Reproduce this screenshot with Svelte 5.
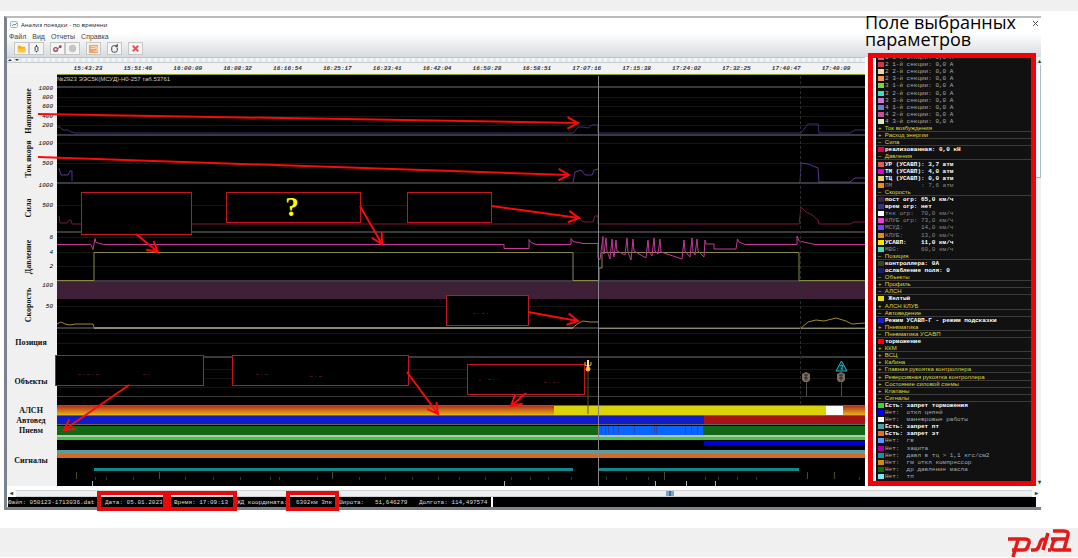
<script lang="ts">
	type Param = { c?: string; t: string; k?: 'group' | 'dim' | 'bold' };

	const times = [
		'15:43:23', '15:51:46', '16:00:09', '16:08:32', '16:16:54', '16:25:17', '16:33:41', '16:42:04',
		'16:50:28', '16:58:51', '17:07:16', '17:15:38', '17:24:02', '17:32:25', '17:40:47', '17:49:09'
	];

	const g = (t: string): Param => ({ t, k: 'group' });
	const b = (c: string, t: string): Param => ({ c, t, k: 'bold' });
	const d = (c: string, t: string): Param => ({ c, t, k: 'dim' });
	const n = (c: string, t: string): Param => ({ c, t });

	const params: Param[] = [
		n('#c86464', '1 3-й секции: 0,0 А'),
		n('#c83c46', '2 1-й секции: 0,0 А'),
		n('#e6dc96', '2 2-й секции: 0,0 А'),
		n('#f09650', '2 3-й секции: 0,0 А'),
		n('#6edc28', '3 1-й секции: 0,0 А'),
		n('#3cdcbe', '3 2-й секции: 0,0 А'),
		n('#c878dc', '3 3-й секции: 0,0 А'),
		n('#6482c8', '4 1-й секции: 0,0 А'),
		n('#c85096', '4 2-й секции: 0,0 А'),
		n('#d2f0b4', '4 3-й секции: 0,0 А'),
		g('+  Ток возбуждения'),
		g('+  Расход энергии'),
		g('−  Сила'),
		b('#e10050', 'реализованная: 0,0 кН'),
		g('−  Давления'),
		b('#dc5a5a', 'УР (УСАВП): 3,7 атм'),
		b('#dc00d2', 'ТМ (УСАВП): 4,0 атм'),
		b('#e6d278', 'ТЦ (УСАВП): 0,0 атм'),
		d('#f08c14', 'ПМ        : 7,6 атм'),
		g('−  Скорость'),
		b('#3c2346', 'пост огр: 65,0 км/ч'),
		b('#3c327d', 'врем огр: нет'),
		d('#ffffff', 'тек огр:  70,0 км/ч'),
		d('#e646d2', 'КЛУБ огр: 73,0 км/ч'),
		d('#7346f0', 'МСУД:     14,0 км/ч'),
		d('#e68c14', 'КЛУБ:     13,0 км/ч'),
		b('#ffe600', 'УСАВП:    11,0 км/ч'),
		d('#46dcb4', 'MBG:      60,0 км/ч'),
		g('−  Позиция'),
		b('#3c4614', 'контроллера: 0А'),
		b('#1e1e64', 'ослабление поля: 0'),
		g('−  Объекты'),
		g('+  Профиль'),
		g('−  АЛСН'),
		b('#e6dc14', ' Желтый'),
		g('+  АЛСН КЛУБ'),
		g('−  Автоведение'),
		b('#1423c8', 'Режим УСАВП-Г - режим подсказки'),
		g('+  Пневматика'),
		g('−  Пневматика УСАВП'),
		b('#ff0000', 'торможение'),
		g('+  ККМ'),
		g('+  ВСЦ'),
		g('+  Кабина'),
		g('+  Главная рукоятка контроллера'),
		g('+  Реверсивная рукоятка контроллера'),
		g('+  Состояние силовой схемы'),
		g('+  Клапаны'),
		g('−  Сигналы'),
		b('#3cd23c', 'Есть: запрет торможения'),
		n('#0000f0', 'Нет:  откл цепей'),
		n('#ffffff', 'Нет:  маневровые работы'),
		b('#50a0a0', 'Есть: запрет пт'),
		b('#e66e1e', 'Есть: запрет эт'),
		n('#6496f0', 'Нет:  гв'),
		n('#a000a0', 'Нет:  защита'),
		n('#149696', 'Нет:  давл в тц > 1,1 кгс/см2'),
		n('#d28c14', 'Нет:  гм откл компрессор'),
		n('#006e14', 'Нет:  др давление масла'),
		n('#82e6f0', 'Нет:  тп')
	];

	const ticks: [number, string][] = [
		[90, '1000'], [99, '800'], [108, '600'], [118, '400'], [127, '200'],
		[145, '1000'], [165, '500'],
		[187, '1000'], [207, '500'],
		[239, '6'], [254, '4'], [268, '2'],
		[287, '100'], [308, '50']
	];
	const vertical: [number, string][] = [
		[111, 'Напряжение'], [159, 'Ток якоря'], [208, 'Сила'], [257, 'Давление'], [305, 'Скорость']
	];
	const horizontal: [number, string][] = [
		[345, 'Позиция'], [384, 'Объекты'], [413, 'АЛСН'], [423, 'Автовед'], [433, 'Пневм'], [463, 'Сигналы']
	];

	const separators = [87, 135, 183, 232, 281, 328, 357];
	const gridLines = [97, 106, 116, 125, 143, 163, 205, 237, 252, 266, 306, 333, 343, 369, 378, 387];

	const spikes = [606, 612, 616, 627, 633, 648, 654, 660, 684, 692, 697];
	const pressure =
		'M57 244.500H91l2 5 2-11 1 4 8 2H504v4H529v-9l2 3 5 2H571v-6l2 3 10 2H598v15l2 1 3-23v14' +
		spikes.map((x, i) => `L${x - 2} ${254 + ((i * 5) % 7)}L${x} ${238 + (i % 3)}L${x + 1} ${251 + (i % 2)}`).join('') +
		'L704 257 705 240 706 244H714V249H736L737.500 239 739 242 745 244.500H797V236L799 241 815 244.500H865';

	// x, y, width, height
	const callouts = [
		[81, 192, 110, 42], [226, 192, 134, 30], [407, 192, 84, 30], [446, 295, 82, 30],
		[55, 355, 148, 30], [232, 355, 176, 30], [467, 364, 117, 30]
	];
	const arrows = [
		[38, 114, 578, 123], [38, 157, 569, 175], [136, 234, 158, 252], [360, 206, 382, 244],
		[491, 206, 579, 218], [528, 312, 578, 321], [129, 385, 64, 430], [407, 372, 438, 414],
		[526, 393, 511, 406]
	];

	function arrowPath([x1, y1, x2, y2]: number[]) {
		const a = Math.atan2(y2 - y1, x2 - x1);
		const p = (s: number) => `${x2 - 12 * Math.cos(a + s)} ${y2 - 12 * Math.sin(a + s)}`;
		return `M${x1} ${y1}L${x2} ${y2}M${p(0.5)}L${x2} ${y2}L${p(-0.5)}`;
	}

	const modeStripes = [601, 605, 608, 613, 618, 634, 654, 656, 685, 691, 697];
	const greenTicks = [95, 106, 133, 185, 213, 240, 270, 279, 317, 359, 385, 412, 438, 459, 485, 511, 530, 548, 571, 606, 626, 648, 664, 705, 718, 737, 756, 859];
	const whiteTicks = [92, 504, 655, 686, 715];
	const tallTicks = [76, 159, 332, 664, 807, 834];
</script>

<div class="page">
	<div class="band top"></div>

	<main class="window">
		<header>
			<div class="bars">
				<div class="title">
					<svg width="9" height="8" viewBox="0 0 9 8"><rect x=".5" y=".5" width="7" height="6" rx="1" fill="#eef4f8" stroke="#a3b5c0" /><path d="M2 5l2-2 1 1 2-2" fill="none" stroke="#6a95ae" /></svg>
					<h1>Анализ поездки - по времени</h1>
				</div>
				<nav>
					<a href="#file">Файл</a>
					<a href="#view">Вид</a>
					<a href="#reports">Отчеты</a>
					<a href="#help">Справка</a>
				</nav>
				<div class="toolbar">
					<button aria-label="Открыть"><svg viewBox="0 0 14 12"><path d="M3 3h3l1 1h4v6H3z" fill="#f2ab19" /><path d="M3 6h9l-1 4H3z" fill="#ffc637" /></svg></button>
					<button aria-label="Устройство"><svg viewBox="0 0 14 12"><path d="M5.500 4.500l1-1h1l1 1v4l-1 1h-1l-1-1zM7 2v2M7 9v1" fill="none" stroke="#333" /></svg></button>
					<span class="gap"></span>
					<button aria-label="Параметры"><svg viewBox="0 0 14 12"><circle cx="5" cy="7" r="2" fill="none" stroke="#a04860" stroke-width="1.500" /><circle cx="10" cy="4" r="1.500" fill="#a8344c" /><path d="M6 9l3-5" stroke="#777" /></svg></button>
					<button aria-label="Стоп"><svg viewBox="0 0 14 12"><ellipse cx="7" cy="6" rx="4" ry="4" fill="#c4c4c4" /></svg></button>
					<span class="gap"></span>
					<button aria-label="Отчет"><svg viewBox="0 0 14 12"><rect x="2" y="2" width="10" height="9" fill="#eea569" /><path d="M4 4h7M4 6h4l3-1v4H7" fill="none" stroke="#fde2c4" /></svg></button>
					<span class="gap"></span>
					<button aria-label="Обновить"><svg viewBox="0 0 14 12"><path d="M10 5v3q0 2-2 2H6q-2 0-2-2V5q0-2 2-2h4M10 1v3H8" fill="none" stroke="#333" /></svg></button>
					<span class="gap"></span>
					<button aria-label="Закрыть файл"><svg viewBox="0 0 14 12"><path d="M4 3l6 6M10 3L4 9" stroke="#e6505a" stroke-width="2" /></svg></button>
				</div>
			</div>
			<h2>Поле выбранных параметров</h2>
			<button class="close" aria-label="Закрыть"><svg width="7" height="7" viewBox="0 0 7 7"><path d="M1 1l5 5M6 1L1 6" stroke="#555" /></svg></button>
		</header>

		<div class="body">
			<section class="charts">
				<div class="splitter"><svg width="14" height="4" viewBox="0 0 14 4"><path d="M1 3l2-2 2 2zM8 1l2 2 2-2z" fill="#333" /></svg></div>
				<div class="times">
					{#each times as t}<span>{t}</span>{/each}
				</div>
				<div class="tracks">
					<svg class="axis" viewBox="7 74 50 412">
						{#each ticks as [y, t]}<text class="tick" x="53" {y}>{t}</text>{/each}
						{#each vertical as [y, t]}<text class="name" transform="translate(31 {y}) rotate(-90)">{t}</text>{/each}
						{#each horizontal as [y, t]}<text class="name" x="31" {y}>{t}</text>{/each}
					</svg>
					<div class="plot">
						<svg viewBox="57 74 808 412" preserveAspectRatio="none">
							<defs>
								<linearGradient id="alsn" x2="0" y2="1">
									<stop offset="0" stop-color="#b4321e" />
									<stop offset="1" stop-color="#e6b414" />
								</linearGradient>
							</defs>
							<rect x="57" y="74" width="808" height="412" />
							<path d="M57 74.500H865" stroke="#8a9a20" />
							{#each gridLines as y}<path d="M57 {y}.500H865" stroke="#131815" />{/each}
							<rect x="57" y="282" width="808" height="17" fill="#3e2037" />
							<path d="M57 396.500H865" stroke="#3c3c3c" />

							<g fill="none">
								<path d="M57 127h3l3 3h5l3 2 4 1H573l5-6h5l5 1 4-3h6v8H801l7-9h10l1 9h31l5-3h10" stroke="#34347a" />
								<path d="M59 168l2 7h7l2-4h2v10M573 182l2-10 6-2 4 5h7l2-5 4-1M800 183l1-20 7 1 10 4 1 14h31l5-4h10" stroke="#5b3596" />
								<path d="M59 216l1 7h7l2-3h2l1 4H573l5-7 4 4 4 1h7l2-6h3v8H799l2-17 5 5 6 3 6 5 1 4h31l4-2h11" stroke="#7a1a3a" />
							</g>
							{#each separators as y}<path d="M57 {y}H865" stroke="#74747c" />{/each}
							<g fill="none">
								<path d="M57 280.500H94V252.500H573V280.500H599V268H602V252.500H799V280.500H865" stroke="#8a8a48" />
								<path d={pressure} stroke="#c03c96" />
								<path d="M57 324l4-2 4 2 5 1 5-1H93l1 3.500H573l5-4 5-2.500 7 1h8M801 328l7-6 8-2 8 1 12-3 10 3 6 3 13-1" stroke="#a08c20" />
								<path d="M94 328.500H573M598 328.500H865" stroke="#8e8c6c" />
							</g>

							<rect x="57" y="405" width="808" height="81" />
							<rect x="57" y="406" width="808" height="9" fill="url(#alsn)" />
							<rect x="554" y="406" width="272" height="9" fill="#dcd20a" />
							<rect x="826" y="406" width="17" height="9" fill="#fff" />
							<rect x="57" y="416" width="647" height="8" fill="#101cc8" />
							<rect x="704" y="416" width="161" height="8" fill="#a51217" />
							<rect x="57" y="426" width="808" height="9" fill="#126814" />
							<rect x="598" y="426" width="105" height="9" fill="#0a64ff" />
							{#each modeStripes as x}<path d="M{x}.500 426V434" stroke="#3346a8" />{/each}
							{#each [405, 415, 424] as y}<path d="M57 {y}.500H865" stroke="#66645c" />{/each}
							<rect x="57" y="435" width="808" height="2" fill="#b4c8b0" />
							<rect x="57" y="437" width="808" height="3" fill="#3cc846" />
							<rect x="704" y="441" width="161" height="4" fill="#0000dc" />
							<rect x="57" y="450" width="808" height="4" fill="#5c9c9e" />
							<rect x="57" y="454" width="808" height="4" fill="#d26a24" />
							<path d="M94 469.500H573M599 469.500H799" stroke="#12888a" stroke-width="3" />
							{#each greenTicks as x}<path d="M{x}.500 477v3" stroke="#1c4a1c" />{/each}
							{#each tallTicks as x}<path d="M{x}.500 472v7" stroke="#4e4a14" />{/each}
							{#each whiteTicks as x}<path d="M{x}.500 481v5" stroke="#b0b0b0" />{/each}

							<path d="M800.500 76V404" stroke="#2c2c2c" stroke-dasharray="3 2" />
							<path d="M598.500 76V486" stroke="#85858a" />
							<path d="M588 371v43" stroke="#5c5420" />
							<path d="M806.500 381V396M841.500 381V396" stroke="#4c4c4c" />

							<path d="M841.500 361l5.500 10h-11z" fill="#062a30" stroke="#28b4c8" />
							<path d="M840 366l2-1 1 1-2 3h2" fill="none" stroke="#28b4c8" />
							{#each [806, 841] as x}
								<path d="M{x - 4} 374l4-2 4 2v6l-2 2h-4l-2-2z" fill="#7a6c60" />
								<path d="M{x - 2} 375h4M{x - 2} 378h4M{x} 374v7" stroke="#2c2824" />
							{/each}

							<g fill="#000" stroke="#c8141e">
								{#each callouts as [x, y, w, h]}<rect x={x + 0.5} y={y + 0.5} width={w} height={h} />{/each}
							</g>
							<path
								d="M473 313.500h17M78 374.500h22M143 374.500h8M256 374.500h14M310 376.500h12M479 380.500h2M488 379.500h10M544 382.500h17"
								stroke="#4c1018"
								stroke-dasharray="3 2 1 3"
							/>
							<g fill="none" stroke="#ffb43c">
								<path d="M588 360v8" stroke="#ffe696" stroke-width="2" />
								<path d="M585 362v3l2 1M591 362v3l-2 1" />
								<circle cx="588" cy="369" r="2" fill="#ffc850" />
							</g>
							<g fill="none" stroke="#fa0a0a" stroke-width="2">
								{#each arrows as a}<path d={arrowPath(a)} />{/each}
							</g>
						</svg>
						<span class="train">№2923 ЭЭС5К(МСУД)-Н0-257 таб.53761</span>
						<span class="question">?</span>
					</div>
				</div>
			</section>

			<aside>
				<ul>
					{#each params as p}
						<li class={p.k}>
							{#if p.c}<i style="background: {p.c}"></i>{/if}
							<span>{p.t}</span>
						</li>
					{/each}
				</ul>
				<div class="vscroll"><b>▴</b><div class="thumb"></div><b>▾</b></div>
			</aside>
		</div>

		<div class="hscroll"><b>◂</b><div class="track"><div class="grip"></div></div><b>▸</b></div>

		<footer class="status">
			<span class="file">Файл: 050123-1713036.dat</span>
			<span class="framed date">Дата: 05.01.2023</span>
			<span class="framed time">Время: 17:09:13</span>
			<span class="rail">ЖД координата:</span>
			<span class="framed km">6302км 3пк</span>
			<span class="lat">Широта:&nbsp;&nbsp; 51,646279</span>
			<span class="lon">Долгота: 114,497574</span>
		</footer>
	</main>

	<div class="band bottom">
		<svg width="68" height="29" viewBox="0 0 68 29" fill="none" stroke="#e21a1a" stroke-width="3.500">
			<path d="M2 11h17q5 0 4 4l-1 3q-1 4-5 4H6M12 12L7 29" />
			<path d="M25 22h3q4 0 5-4l1-3q1-4 5-4h2M37 22l5-17" />
			<path d="M42 22h3M45 11h9M47 3h11q5 0 4 4l-4 15h-9q-4 0-3-4l1-3q1-4 5-4h8M57 22h8" />
		</svg>
	</div>
</div>

<style>
	:global(body) {
		margin: 0;
		background: #fff;
	}

	.page {
		font-family: 'Liberation Sans', Arial, sans-serif;
		font-size: 7px;
		color: #333;
		overflow: hidden;
	}

	.band {
		background: #f0f0f0;
	}

	.top {
		height: 11px;
	}

	.bottom {
		height: 29px;
		margin-top: 18px;
		padding-right: 4px;
		display: flex;
		justify-content: flex-end;
	}

	.window {
		margin: 5px 37px 0 4px;
		border-top: 2px solid #bcbcbc;
		border-left: 3px solid #7c828c;
		border-bottom: 3px solid #80848a;
		background: #fff;
	}

	header {
		display: grid;
		grid-template-columns: 1fr 164px 12px;
		height: 39px;
		background: linear-gradient(#fff 40%, #d8dade);
	}

	.title {
		display: flex;
		align-items: center;
		gap: 2px;
		height: 13px;
		padding-left: 3px;
	}

	h1 {
		margin: 0;
		font: 6px 'Open Sans', sans-serif;
		color: #222;
	}

	nav {
		display: flex;
		gap: 6px;
		height: 11px;
		padding-left: 2px;
		line-height: 11px;
	}

	nav a {
		color: #444;
		text-decoration: none;
	}

	.toolbar {
		display: flex;
		height: 14px;
		padding-left: 7px;
	}

	.toolbar button {
		box-sizing: border-box;
		width: 15px;
		height: 13px;
		padding: 0;
		border: 1px solid #c4c6c8;
		background: #f4f4f4;
		display: flex;
	}

	.toolbar svg {
		width: 13px;
		height: 11px;
	}

	.gap {
		width: 6px;
	}

	h2 {
		margin: -4px 0 0;
		font: 18px/17px 'Open Sans', sans-serif;
		color: #000;
	}

	.close {
		align-self: start;
		padding: 2px 0;
		border: 0;
		background: none;
		line-height: 0;
	}

	.body {
		display: grid;
		grid-template-columns: 1fr 176px;
	}

	.splitter {
		height: 6px;
		box-sizing: border-box;
		border-top: 1px solid #b8c4ca;
		border-bottom: 1px solid #c4ccd0;
		background: repeating-linear-gradient(90deg, #e2eaee 0 3px, #f2f6f8 3px 6px);
		line-height: 0;
	}

	.times {
		display: flex;
		height: 11px;
		padding: 0 4px 0 56px;
		background: #f2f2f2;
		font: italic bold 6px/12px 'Liberation Mono', monospace;
	}

	.times span {
		flex: 1;
		text-align: center;
	}

	.tracks {
		display: grid;
		grid-template-columns: 50px 1fr;
	}

	.axis {
		width: 50px;
		height: 412px;
		background: #f0f0f0;
		display: block;
	}

	.tick {
		font: italic 6px 'Liberation Mono', monospace;
		text-anchor: end;
	}

	.name {
		font: bold 8px 'Liberation Serif', serif;
		text-anchor: middle;
		fill: #111;
	}

	.plot {
		position: relative;
	}

	.plot svg {
		display: block;
		width: 100%;
		height: 412px;
		overflow: visible;
	}

	.train {
		position: absolute;
		left: 0;
		top: 1px;
		color: #ccc;
		font-size: 6px;
		line-height: 9px;
	}

	.question {
		position: absolute;
		left: 28%;
		top: 118px;
		padding-left: 2px;
		font: bold 27px/30px 'Liberation Serif', serif;
		color: #ff0;
	}

	aside {
		position: relative;
		display: grid;
		grid-template-columns: 1fr 7px;
		padding-left: 11px;
		height: 429px;
	}

	/* highlight frame over the parameter list */
	aside::after {
		content: '';
		position: absolute;
		inset: -4px 5px 0 3px;
		border: 5px solid #f00008;
	}

	ul {
		box-sizing: border-box;
		margin: -3px 2px 0 0;
		padding: 0 0 6px;
		list-style: none;
		display: grid;
		grid-auto-rows: minmax(0, 1fr);
		height: 432px;
		background: #111;
	}

	li {
		display: flex;
		align-items: center;
		gap: 1px;
		padding-left: 2px;
		box-sizing: border-box;
		font: 6px/7px 'Liberation Mono', monospace;
		color: #aaa;
		white-space: pre;
	}

	li i {
		width: 6px;
		height: 5px;
	}

	li.bold {
		font-weight: bold;
		color: #fff;
	}

	li.dim {
		color: #8a8a8a;
	}

	li.group {
		font-family: 'Liberation Sans', sans-serif;
		line-height: 6px;
		color: #d8d83c;
		border-bottom: 1px solid #3c3c3c;
	}

	.vscroll {
		display: flex;
		flex-direction: column;
		justify-content: space-between;
		background: #eef0f2;
		font-size: 6px;
		line-height: 8px;
		text-align: right;
	}

	.thumb {
		flex: 1;
		margin: 0 0 300px;
		border-right: 1px solid #a9bcc8;
		border-bottom: 1px solid #9ab0be;
		background: #f8fafc;
	}

	.hscroll {
		display: flex;
		height: 7px;
		margin-top: 4px;
		background: #eceef0;
		font-size: 6px;
		line-height: 7px;
	}

	.hscroll b {
		width: 9px;
		text-align: center;
		background: #fff;
	}

	.track {
		flex: 1;
		border: 1px solid #cfd3d6;
		border-width: 1px 0;
	}

	.grip {
		width: 2px;
		height: 5px;
		margin-left: 64%;
		border: 1px solid #7aa6d0;
		border-width: 0 3px;
		background: #3c6ea0;
	}

	.status {
		display: flex;
		height: 10px;
		margin: 0 5px 0 1px;
		background: #000;
		color: #ddd;
		font: 6px/11px 'Liberation Mono', monospace;
		white-space: nowrap;
	}

	.status span {
		box-sizing: border-box;
	}

	.framed {
		position: relative;
	}

	.framed::after {
		content: '';
		position: absolute;
		inset: -6px 0 -4px;
		border: 4px solid #e60a0a;
	}

	.file {
		width: 89px;
	}

	.date {
		width: 70px;
		padding-left: 8px;
	}

	.time {
		width: 70px;
		padding-left: 7px;
	}

	.rail {
		width: 49px;
	}

	.km {
		width: 53px;
		padding-left: 10px;
	}

	.lat {
		width: 80px;
	}

	.lon {
		padding-right: 4px;
		border-right: 2px solid #fff;
	}
</style>
